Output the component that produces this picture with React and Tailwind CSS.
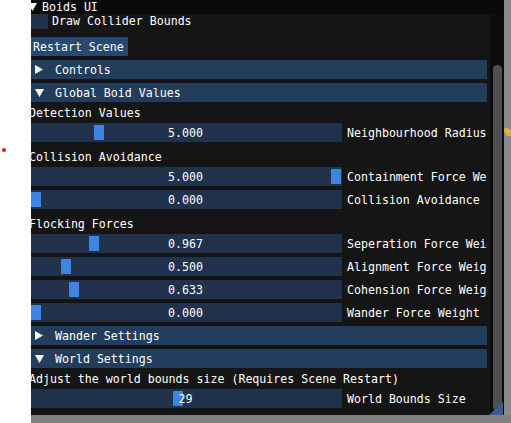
import React from "react";

const FONT = "font-['DejaVu_Sans_Mono','Liberation_Mono',monospace] text-[11.6px] leading-[13px] text-white";

function TriRight() {
  return (
    <svg width="8" height="9" viewBox="0 0 8 9" className="shrink-0">
      <polygon points="0,0 8,4.5 0,9" fill="#ffffff" />
    </svg>
  );
}

function TriDown() {
  return (
    <svg width="9" height="8" viewBox="0 0 9 8" className="shrink-0">
      <polygon points="0,0 9,0 4.5,8" fill="#ffffff" />
    </svg>
  );
}

function Header({ open, label }) {
  return (
    <div className="mt-[4px] flex h-[19px] w-[458px] shrink-0 items-center bg-[#233d5c]">
      <div className="ml-[6px] flex w-[20px] items-center">{open ? <TriDown /> : <TriRight />}</div>
      <span className="whitespace-nowrap pt-[2px]">{label}</span>
    </div>
  );
}

function Slider({ value, label, grab, mt = "mt-[4px]" }) {
  return (
    <div className={`${mt} flex h-[19px] shrink-0 items-center`}>
      <div className="relative flex h-[19px] w-[313px] shrink-0 items-center justify-center bg-[#20324c]">
        <div className="absolute top-[2px] h-[15px] w-[10px] bg-[#3d85e0]" style={{ left: grab }} />
        <span className="relative whitespace-nowrap pt-[2px]">{value}</span>
      </div>
      <span className="ml-[5px] whitespace-nowrap pt-[2px]">{label}</span>
    </div>
  );
}

function TextLine({ children, mt = "mt-[4px]" }) {
  return <div className={`${mt} h-[13px] shrink-0 whitespace-nowrap pt-[1px]`}>{children}</div>;
}

export default function App() {
  return (
    <div className={`flex h-[423px] w-[511px] overflow-hidden bg-white ${FONT}`}>
      {/* white area on the left */}
      <div className="flex w-[31px] shrink-0 flex-col">
        <div className="ml-[2px] mt-[148px] h-[4px] w-[4px] rounded-full bg-[#e01818]" />
      </div>

      <div className="flex w-[480px] shrink-0 flex-col">
        <div className="flex h-[415px] shrink-0">
          {/* ImGui window */}
          <div className="relative flex h-[415px] w-[473px] shrink-0 flex-col">
            {/* title bar */}
            <div className="flex h-[14px] shrink-0 items-center overflow-hidden bg-[#0a0a0a]">
              <div className="-ml-[3px] mr-[5px] flex w-[9px] items-center">
                <TriDown />
              </div>
              <span className="whitespace-nowrap">Boids UI</span>
            </div>

            {/* body */}
            <div className="flex min-h-0 flex-1">
              <div className="w-[459px] shrink-0 bg-[#151515]">
                <div className="h-full w-[456px] overflow-hidden">
                  <div className="-ml-[2px] flex flex-col">
                    {/* checkbox */}
                    <div className="flex h-[15px] shrink-0 items-center">
                      <div className="h-[15px] w-[19px] shrink-0 bg-[#20324c]" />
                      <span className="ml-[4px] whitespace-nowrap">Draw Collider Bounds</span>
                    </div>

                    {/* button */}
                    <div className="mt-[8px] flex h-[19px] w-[99px] shrink-0 items-center bg-[#274971] px-[4px]">
                      <span className="whitespace-nowrap pt-[2px]">Restart Scene</span>
                    </div>

                    <Header open={false} label="Controls" />
                    <Header open={true} label="Global Boid Values" />

                    <TextLine>Detection Values</TextLine>
                    <Slider value="5.000" label="Neighbourhood Radius" grab={65} />

                    <TextLine mt="mt-[8px]">Collision Avoidance</TextLine>
                    <Slider value="5.000" label="Containment Force Weight" grab={302} />
                    <Slider value="0.000" label="Collision Avoidance" grab={2} />

                    <TextLine mt="mt-[8px]">Flocking Forces</TextLine>
                    <Slider value="0.967" label="Seperation Force Weight" grab={60} />
                    <Slider value="0.500" label="Alignment Force Weight" grab={32} />
                    <Slider value="0.633" label="Cohension Force Weight" grab={40} />
                    <Slider value="0.000" label="Wander Force Weight" grab={2} />

                    <Header open={false} label="Wander Settings" />
                    <Header open={true} label="World Settings" />

                    <TextLine>Adjust the world bounds size (Requires Scene Restart)</TextLine>
                    <Slider value="29" label="World Bounds Size" grab={144} />
                  </div>
                </div>
              </div>

              {/* scrollbar */}
              <div className="w-[14px] shrink-0 bg-[#0c0c0c]">
                <div className="ml-[3px] mt-[51px] h-[346px] w-[9px] rounded-full bg-[#4f4f4f]" />
              </div>
            </div>

            {/* resize grip */}
            <svg width="14" height="13" viewBox="0 0 14 13" className="absolute bottom-0 right-[1px]">
              <polygon points="14,0 14,13 0,13" fill="#35608f" />
            </svg>
          </div>

          {/* grey scene to the right */}
          <div className="flex w-[7px] shrink-0 flex-col bg-[#8a8a8a]">
            <svg width="7" height="12" viewBox="0 0 7 12" className="mt-[126px]">
              <ellipse cx="4" cy="6" rx="3" ry="5" transform="rotate(-35 4 6)" fill="#e0b040" />
            </svg>
          </div>
        </div>

        {/* grey scene at the bottom */}
        <div className="h-[8px] shrink-0 bg-[#808080]" />
      </div>
    </div>
  );
}
